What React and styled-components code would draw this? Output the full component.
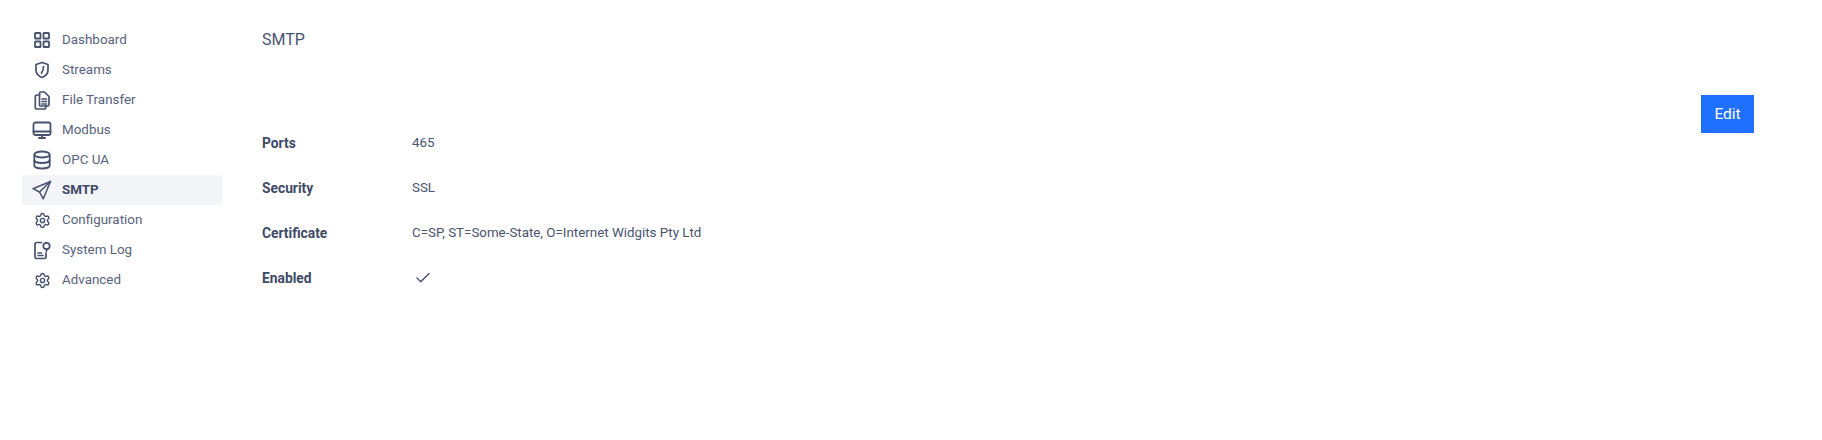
import React from "react";
import styled, { createGlobalStyle } from "styled-components";
import { Check, Settings } from "lucide-react";

const menu = [
  { label: "Dashboard", icon: "grid" },
  { label: "Streams", icon: "shield" },
  { label: "File Transfer", icon: "files" },
  { label: "Modbus", icon: "monitor" },
  { label: "OPC UA", icon: "database" },
  { label: "SMTP", icon: "send", active: true },
  { label: "Configuration", icon: "gear" },
  { label: "System Log", icon: "log" },
  { label: "Advanced", icon: "gear" },
];

const GridIcon = () => (
  <svg width="20" height="20" viewBox="0 0 20 20" fill="none" stroke="currentColor" strokeWidth="1.8">
    <rect x="3" y="3" width="5.500" height="5.500" rx=".6" />
    <rect x="11.500" y="3" width="5.500" height="5.500" rx=".6" />
    <rect x="3" y="11.500" width="5.500" height="5.500" rx=".6" />
    <rect x="11.500" y="11.500" width="5.500" height="5.500" rx=".6" />
  </svg>
);

const ShieldIcon = () => (
  <svg width="20" height="20" viewBox="0 0 20 20" fill="none" stroke="currentColor" strokeWidth="1.7" strokeLinejoin="round" strokeLinecap="round">
    <path d="M10 2.500l6 2v5.500c0 3.600-2.500 6.200-6 7.500-3.500-1.300-6-3.900-6-7.500V4.500z" />
    <path d="M11.500 6.500c0 2.500-.5 4.500-2 6.500" />
  </svg>
);

const FilesIcon = () => (
  <svg width="20" height="20" viewBox="0 0 20 20" fill="none" stroke="currentColor" strokeWidth="1.7" strokeLinejoin="round" strokeLinecap="round">
    <path d="M7.500 4V3.500c0-.9.700-1.500 1.500-1.500h3.500L17 6.500v8c0 .9-.7 1.500-1.500 1.500H14" />
    <path d="M7.500 5H5c-1 0-1.700.7-1.700 1.700v10.600c0 1 .7 1.700 1.700 1.700h7c1 0 1.700-.7 1.700-1.700V16" />
    <path d="M7.500 4v11c0 .6.400 1 1 1h6" />
    <path d="M10 9h4.500M10 11.500h4.500M10 14h4.500" />
  </svg>
);

const MonitorIcon = () => (
  <svg width="20" height="20" viewBox="0 0 20 20" fill="none" stroke="currentColor" strokeWidth="1.8" strokeLinejoin="round" strokeLinecap="round">
    <rect x="1.500" y="2.500" width="17" height="12.500" rx="2" />
    <path d="M1.500 11.500h17M10 15v3M7 18h6" />
  </svg>
);

const DatabaseIcon = () => (
  <svg width="20" height="20" viewBox="0 0 20 20" fill="none" stroke="currentColor" strokeWidth="1.8" strokeLinejoin="round">
    <ellipse cx="10" cy="4.500" rx="7.700" ry="3" />
    <path d="M2.300 4.500v11c0 1.700 3.400 3 7.700 3s7.700-1.300 7.700-3v-11" />
    <path d="M2.300 10c0 1.700 3.400 3 7.700 3s7.700-1.300 7.700-3" />
  </svg>
);

const SendIcon = () => (
  <svg width="20" height="20" viewBox="0 0 20 20" fill="none" stroke="currentColor" strokeWidth="1.5" strokeLinejoin="round" strokeLinecap="round">
    <path d="M18.500 1.500L1 8.700l6.500 3.300 3.800 6.800z" />
    <path d="M18.500 1.500L7.500 12" />
  </svg>
);

const LogIcon = () => (
  <svg width="20" height="20" viewBox="0 0 20 20" fill="none" stroke="currentColor" strokeWidth="1.7" strokeLinejoin="round" strokeLinecap="round">
    <path d="M9.500 2.500H4.500c-1 0-1.500.6-1.500 1.500v13c0 .9.500 1.500 1.500 1.500h8c1 0 1.500-.6 1.500-1.500v-4" />
    <path d="M6 13h3.500M6 15.500h5" />
    <circle cx="14.500" cy="6" r="3.200" />
    <path d="M14.500 9.200v2" />
  </svg>
);

const iconFor = (name) => {
  switch (name) {
    case "grid":
      return <GridIcon />;
    case "shield":
      return <ShieldIcon />;
    case "files":
      return <FilesIcon />;
    case "monitor":
      return <MonitorIcon />;
    case "database":
      return <DatabaseIcon />;
    case "send":
      return <SendIcon />;
    case "log":
      return <LogIcon />;
    default:
      return <Settings size={17} strokeWidth={2} />;
  }
};

const App = () => {
  return (
    <>
      <GlobalStyle />
      <Page>
        <Sidebar>
          {menu.map((item) => (
            <MenuItem key={item.label} $active={item.active}>
              <IconSlot>{iconFor(item.icon)}</IconSlot>
              <MenuLabel>{item.label}</MenuLabel>
            </MenuItem>
          ))}
        </Sidebar>
        <Main>
          <Title>SMTP</Title>
          <Toolbar>
            <EditButton>Edit</EditButton>
          </Toolbar>
          <Details>
            <Row>
              <Label>Ports</Label>
              <Value>465</Value>
            </Row>
            <Row>
              <Label>Security</Label>
              <Value>SSL</Value>
            </Row>
            <Row>
              <Label>Certificate</Label>
              <Value>C=SP, ST=Some-State, O=Internet Widgits Pty Ltd</Value>
            </Row>
            <Row>
              <Label>Enabled</Label>
              <Value>
                <CheckMark><Check size={18} strokeWidth={1.7} /></CheckMark>
              </Value>
            </Row>
          </Details>
        </Main>
      </Page>
    </>
  );
};

const GlobalStyle = createGlobalStyle`
  body {
    margin: 0;
    background: #fff;
    font-family: "Roboto", "Liberation Sans", sans-serif;
    color: #4a5470;
  }
`;

const Page = styled.div`
  display: flex;
  align-items: flex-start;
  gap: 40px;
  height: 440px;
  padding: 25px 68px 0 22px;
  box-sizing: border-box;
`;

const Sidebar = styled.nav`
  flex: 0 0 200px;
  display: flex;
  flex-direction: column;
`;

const MenuItem = styled.div`
  display: flex;
  align-items: center;
  height: 30px;
  padding-left: 10px;
  font-size: 13.4px;
  font-weight: ${(p) => (p.$active ? 700 : 400)};
  color: ${(p) => (p.$active ? "#3e4a66" : "#58627c")};
  background: ${(p) => (p.$active ? "#f4f5f8" : "transparent")};
`;

const IconSlot = styled.span`
  display: flex;
  align-items: center;
  justify-content: center;
  width: 20px;
  margin-right: 10px;
  color: #46516e;
`;

const MenuLabel = styled.span`
  padding-bottom: 2px;
`;

const Main = styled.main`
  flex: 1;
  display: flex;
  flex-direction: column;
`;

const Title = styled.h1`
  margin: 0;
  height: 30px;
  line-height: 30px;
  font-size: 16px;
  font-weight: 400;
  color: #4a5470;
`;

const Toolbar = styled.div`
  display: flex;
  justify-content: flex-end;
  margin-top: 40px;
`;

const EditButton = styled.button`
  width: 53px;
  height: 38px;
  border: 0;
  padding: 0;
  background: #2070ff;
  color: #fff;
  font-family: inherit;
  font-size: 15.500px;
`;

const Details = styled.div`
  display: flex;
  flex-direction: column;
  margin-top: -12px;
`;

const Row = styled.div`
  display: flex;
  align-items: center;
  height: 45px;
  font-size: 13.350px;
`;

const Label = styled.div`
  width: 149px;
  padding-bottom: 2px;
  font-size: 13.800px;
  font-weight: 700;
  color: #3e4a66;
`;

const Value = styled.div`
  padding-bottom: 2px;
  margin-left: 1px;
  color: #4a5470;
`;

const CheckMark = styled.span`
  display: flex;
  margin-left: 2px;
  color: #3e4a66;
`;

export default App;
